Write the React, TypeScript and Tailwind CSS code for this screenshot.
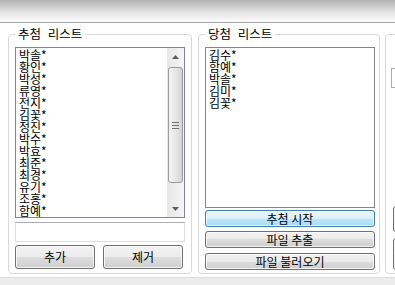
import type { ReactNode } from "react";

const candidates = ["박솔", "황인", "박성", "류영", "전지", "김꽃", "정진", "박수", "박효", "최준", "최경", "유기", "조홍", "함예"];
const winners = ["김수", "함예", "박솔", "김미", "김꽃"];

function WinButton({ label, active = false, className = "" }: { label?: string; active?: boolean; className?: string }) {
  return (
    <button
      className={`flex items-center justify-center rounded-[3px] border text-[12px] leading-none text-black shadow-[inset_0_0_0_1px_rgba(255,255,255,0.75)] ${
        active
          ? "border-[#3c7fb1] bg-[linear-gradient(#eaf6fd,#d9f0fc_50%,#bee6fd_50%,#a7d9f5)]"
          : "border-[#707070] bg-[linear-gradient(#f2f2f2,#ebebeb_50%,#dddddd_50%,#cfcfcf)]"
      } ${className}`}
    >
      {label}
    </button>
  );
}

function GroupBox({ title, className, children }: { title?: string; className: string; children: ReactNode }) {
  return (
    <div className={`relative shrink-0 rounded-[4px] border border-[#d5d9de] ${className}`}>
      {title && (
        <span className="absolute -top-[8px] left-[6px] bg-white px-[3px] text-[12.5px] leading-[14px] text-black">
          {title}
        </span>
      )}
      {children}
    </div>
  );
}

function Arrow({ down = false }: { down?: boolean }) {
  return (
    <div className="flex h-[17px] items-center justify-center">
      <svg width="7" height="4" viewBox="0 0 7 4">
        <path d={down ? "M0 0 L7 0 L3.5 4Z" : "M0 4 L3.5 0 L7 4Z"} fill="#5a5a5a" />
      </svg>
    </div>
  );
}

function ScrollBar() {
  return (
    <div className="flex w-[17px] shrink-0 flex-col bg-[linear-gradient(to_right,#e6e6e6,#f6f6f6)]">
      <Arrow />
      <div className="flex-1 px-[1px] pb-[17px] pt-[2px]">
        <div className="flex h-full flex-col items-center justify-center gap-[2px] rounded-[3px] border border-[#9a9a9a] bg-[linear-gradient(to_right,#f4f4f4,#e4e4e4_60%,#d4d4d4)]">
          <div className="h-px w-[7px] bg-[#6f6f6f]" />
          <div className="h-px w-[7px] bg-[#6f6f6f]" />
          <div className="h-px w-[7px] bg-[#6f6f6f]" />
        </div>
      </div>
      <Arrow down />
    </div>
  );
}

function Items({ names }: { names: string[] }) {
  return (
    <ul className="px-[3px] pt-[1px] text-[12px] leading-[12px] text-black">
      {names.map((n, i) => (
        <li key={i} className="whitespace-nowrap">
          {n}*
        </li>
      ))}
    </ul>
  );
}

export default function App() {
  return (
    <div className="h-[285px] w-[395px] overflow-hidden bg-white font-['Noto_Sans_CJK_KR','Noto_Sans',sans-serif] font-normal [word-spacing:4px]">
      {/* title bar */}
      <div className="h-[23px] border-b border-[#a3a3a3] bg-[linear-gradient(#b3b3b3,#e6e6e6_60%,#fcfcfc)]" />

      {/* group boxes */}
      <div className="flex gap-[6px] pb-[3px] pl-[8px] pt-[11px]">
        <GroupBox title="추첨 리스트" className="h-[240px] w-[184px] px-[6px] pb-[4px] pt-[12px]">
          <div className="flex h-[171px] w-[170px] border border-[#828790] bg-white">
            <div className="flex-1 overflow-hidden">
              <Items names={candidates} />
            </div>
            <ScrollBar />
          </div>
          <div className="mt-[4px] h-[20px] w-[170px] border border-[#dbdfe6] border-t-[#abadb3] bg-white" />
          <div className="mt-[3px] flex w-[170px] gap-[8px]">
            <WinButton label="추가" className="h-[24px] w-[80px]" />
            <WinButton label="제거" className="h-[24px] w-[80px]" />
          </div>
        </GroupBox>

        <GroupBox title="당첨 리스트" className="h-[240px] w-[182px] pb-[3px] pl-[6px] pr-[4px] pt-[12px]">
          <div className="h-[161px] w-[170px] border border-[#828790] bg-white">
            <Items names={winners} />
          </div>
          <WinButton label="추첨 시작" active className="mt-[2px] h-[17px] w-[170px]" />
          <WinButton label="파일 추출" className="mt-[4px] h-[17px] w-[170px]" />
          <WinButton label="파일 불러오기" className="mt-[5px] h-[17px] w-[170px]" />
        </GroupBox>

        <GroupBox className="ml-[-1px] h-[240px] w-[120px] pl-[5px] pt-[33px]">
          <div className="h-[20px] w-[100px] border border-[#abadb3] bg-white" />
          <div className="ml-[8px] mt-[11px] h-[13px] w-[13px] rounded-full border border-[#b4b4b4] bg-white" />
          <div className="ml-[8px] mt-[4px] h-[13px] w-[13px] rounded-full border border-[#b4b4b4] bg-white" />
          <WinButton className="ml-[2px] mt-[77px] h-[26px] w-[90px]" />
          <WinButton className="ml-[2px] mt-[6px] h-[32px] w-[90px]" />
        </GroupBox>
      </div>

      {/* status strip */}
      <div className="h-[8px] border-t border-[#dcdcdc] bg-[#ececec]" />
    </div>
  );
}
